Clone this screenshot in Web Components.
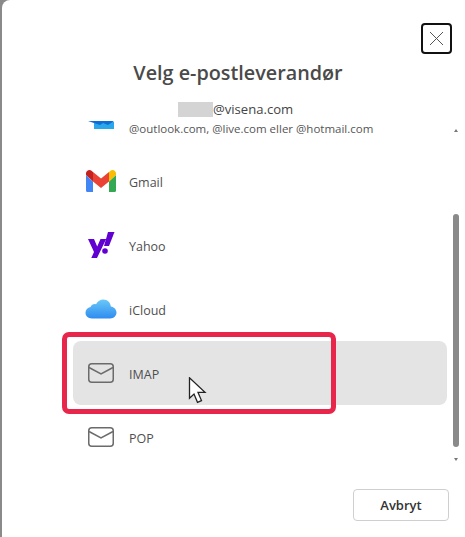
<!doctype html>
<html lang="no"><head><meta charset="utf-8">
<style>html,body{margin:0;padding:0;background:#8a8a8a}body{width:465px;height:537px;overflow:hidden;font-family:"Open Sans","Noto Sans",sans-serif}</style>
</head><body>
<provider-dialog>
  <provider-row name="Gmail"><svg slot="icon" width="32" height="24" viewBox="0 0 32 24"><path d="M1 22.500V6l4 4 3 2.500V23H2.500A1.500 1.500 0 0 1 1 21.500z" fill="#4285f4"/><path d="M31 22V6l-7 6.500V23h5.500A1.500 1.500 0 0 0 31 21.500z" fill="#34a853"/><path d="M8 12.500V3l8 6.500L24 3v9.500L16 19z" fill="#ea4335"/><path d="M1 6V4.500C1 1.500 4.500 .2 6.500 1.800L8 3v9.500z" fill="#c5221f"/><path d="M24 3l1.500-1.200C27.500 .2 31 1.500 31 4.500V6l-7 6.500z" fill="#fbbc04"/></svg></provider-row>
  <provider-row name="Yahoo"><svg slot="icon" width="32" height="26" viewBox="0 0 32 26"><path d="M3 7h6l3.200 7.500L15.500 7h5.700L12 26H6.300l2.700-6z" fill="#6001d2"/><circle cx="20" cy="19" r="2.800" fill="#6001d2"/><path d="M23 0h6.500L24 14h-5z" fill="#6001d2"/></svg></provider-row>
  <provider-row name="iCloud"><svg slot="icon" width="32" height="20" viewBox="0 0 32 20"><defs><linearGradient id="c" x1="0" y1="0" x2="0" y2="1"><stop offset="0" stop-color="#6ac8f8"/><stop offset="1" stop-color="#2f8cf0"/></linearGradient></defs><path d="M7 19.500C3 19.500 .5 17 .5 13.800c0-3 2-5.300 5-5.800C6.500 5.500 9 4.500 11 5.300 12.500 2.200 15.500 .5 18.500 .5c4 0 7 3 7.300 7 3.400.6 5.700 3 5.700 6.100 0 3.300-2.700 5.900-6.300 5.900z" fill="url(#c)"/></svg></provider-row>
  <provider-row name="IMAP" hover><svg slot="icon" width="28" height="22" viewBox="0 0 28 22"><rect x="1.750" y="1.750" width="24.500" height="18.500" rx="3" fill="none" stroke="#6b6b6b" stroke-width="1.500"/><path d="M2 5.500l12 6.500 12-6.500" fill="none" stroke="#6b6b6b" stroke-width="1.500"/></svg></provider-row>
  <provider-row name="POP"><svg slot="icon" width="28" height="22" viewBox="0 0 28 22"><rect x="1.750" y="1.750" width="24.500" height="18.500" rx="3" fill="none" stroke="#6b6b6b" stroke-width="1.500"/><path d="M2 5.500l12 6.500 12-6.500" fill="none" stroke="#6b6b6b" stroke-width="1.500"/></svg></provider-row>
</provider-dialog>
<script>
class ProviderRow extends HTMLElement{
  constructor(){super();
    this.attachShadow({mode:'open'}).innerHTML=`<style>
      :host{display:grid;flex:none;grid-template-columns:56px 1fr;align-items:center;height:64px;border-radius:8px;color:#4f4f4f;font-size:12.500px}
      :host([hover]){background:#e4e4e4}
      .i{display:flex;justify-content:center}
      #n{padding-top:2px}
    </style><div class="i"><slot name="icon"></slot></div><div id="n"></div>`;
  }
  connectedCallback(){this.shadowRoot.getElementById('n').textContent=this.getAttribute('name')}
}
customElements.define('provider-row',ProviderRow);
class ProviderDialog extends HTMLElement{
  constructor(){super();
    this.attachShadow({mode:'open'}).innerHTML=`<style>
      :host{display:flex;flex-direction:column;box-sizing:border-box;position:relative;width:463px;height:537px;margin-left:2px;background:#fff;border-top-left-radius:8px;overflow:hidden;color:#444}
      header{display:flex;justify-content:flex-end;padding:23px 13px 0 0}
      button{font:inherit;background:#fff;margin:0;padding:0}
      .x{width:31px;height:31px;box-sizing:border-box;border:2px solid #111;border-radius:4px;display:flex;align-items:center;justify-content:center}
      h1{margin:6px 0 0;padding-left:9px;font-size:19.800px;line-height:26px;font-weight:600;text-align:center;color:#4a4a4a}
      .main{display:grid;grid-template-columns:1fr 14px;height:360px;margin-top:13px}
      .list{display:flex;flex-direction:column;padding:0 0 0 71px;width:374px;overflow:hidden}
      .first{display:grid;flex:none;grid-template-columns:56px 1fr;grid-template-rows:20px 21px;height:50px;align-content:start;font-size:11.500px;color:#555}
      .mail{grid-column:2;grid-row:1;padding-left:49px;font-size:13.100px;line-height:18px;color:#444;display:flex;align-items:center}
      .red{width:35px;height:15px;background:#d4d4d4}
      .sub{grid-column:2;grid-row:2;line-height:20px;white-space:nowrap}
      .ol{grid-column:1;grid-row:2;display:flex;justify-content:center;height:8px;overflow:hidden;margin-top:2px}
      .bar{position:relative}
      .up,.down{position:absolute;left:3px;width:0;height:0;border-left:2px solid transparent;border-right:2px solid transparent}
      .up{top:30px;border-bottom:3px solid #777}
      .down{top:359px;border-top:3px solid #777}
      .thumb{position:absolute;left:2px;top:115px;width:6px;height:233px;background:#8a8a8a;border-radius:3px}
      footer{display:flex;justify-content:flex-end;padding:30px 16px 0 0}
      .cancel{width:96px;height:32px;border:1px solid #cfcfcf;border-radius:4px;font-size:13px;font-weight:600;color:#333}
      .mark{position:absolute;left:60px;top:332px;width:274px;height:82px;box-sizing:border-box;border:5px solid #e8254a;border-radius:7px;pointer-events:none}
      .cursor{position:absolute;left:183px;top:377px}
    </style>
    <header><button class="x" aria-label="Lukk"><svg width="15" height="15" viewBox="0 0 15 15"><path d="M1 1l13 13M14 1L1 14" stroke="#555" stroke-width="1" fill="none"/></svg></button></header>
    <h1>Velg e-postleverandør</h1>
    <div class="main">
      <div class="list">
        <div class="first">
          <div class="mail"><span class="red"></span><span>@visena.com</span></div>
          <div class="ol"><svg width="28" height="8" viewBox="0 0 28 8"><path d="M7 1h20v7H7z" fill="#28a8ea"/><path d="M1 0h26l-6 4-5-2-3 2z" fill="#0f6cd6"/></svg></div>
          <div class="sub">@outlook.com, @live.com eller @hotmail.com</div>
        </div>
        <slot></slot>
      </div>
      <div class="bar"><i class="up"></i><i class="thumb"></i><i class="down"></i></div>
    </div>
    <footer><button class="cancel">Avbryt</button></footer>
    <div class="mark"></div>
    <svg class="cursor" width="24" height="28" viewBox="0 0 24 28"><path d="M4.500 .8v20.500l4.500-4.200 3.500 8.200 4-1.700-3.500-8.200h7z" fill="#fff" stroke="#222" stroke-width="1.300"/></svg>`;
  }
}
customElements.define('provider-dialog',ProviderDialog);
</script>
</body></html>
